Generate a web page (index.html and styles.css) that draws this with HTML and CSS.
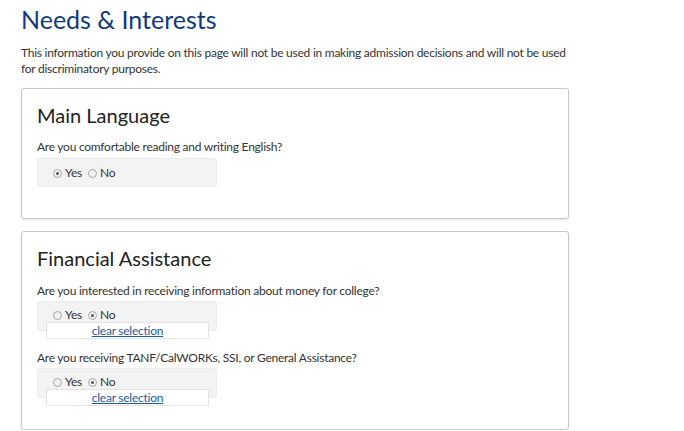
FILE: index.html
```html
<!DOCTYPE html>
<html lang="en">
<head>
<meta charset="utf-8">
<title>Needs &amp; Interests</title>
<link rel="stylesheet" href="styles.css">
</head>
<body>
<main class="page">
  <h1 class="page-title">Needs &amp; Interests</h1>
  <p class="intro">This information you provide on this page will not be used in making admission decisions and will not be used for discriminatory purposes.</p>

  <section class="card card-lang">
    <h2 class="card-title">Main Language</h2>
    <p class="question">Are you comfortable reading and writing English?</p>
    <div class="choice-box">
      <div class="choices">
        <span class="radio checked"></span><span class="opt">Yes</span>
        <span class="radio"></span><span class="opt">No</span>
      </div>
    </div>
  </section>

  <section class="card card-fin">
    <h2 class="card-title">Financial Assistance</h2>
    <p class="question">Are you interested in receiving information about money for college?</p>
    <div class="choice-box with-clear">
      <div class="choices">
        <span class="radio"></span><span class="opt">Yes</span>
        <span class="radio checked"></span><span class="opt">No</span>
      </div>
      <div class="clear"><a href="#">clear selection</a></div>
    </div>
    <p class="question q2">Are you receiving TANF/CalWORKs, SSI, or General Assistance?</p>
    <div class="choice-box with-clear">
      <div class="choices">
        <span class="radio"></span><span class="opt">Yes</span>
        <span class="radio checked"></span><span class="opt">No</span>
      </div>
      <div class="clear"><a href="#">clear selection</a></div>
    </div>
  </section>
</main>
</body>
</html>
```

FILE: styles.css
```css
* { box-sizing: border-box; }
html, body { margin: 0; padding: 0; background: #fff; }
body {
  font-family: Lato, "Open Sans", "Liberation Sans", sans-serif;
  color: #333;
  font-size: 12px;
  line-height: 16px;
  letter-spacing: -0.25px;
}
.page { padding: 0 21px; width: 600px; }
.page-title {
  margin: 0;
  padding-top: 3px;
  font-size: 25px;
  line-height: 32px;
  font-weight: 400;
  letter-spacing: 0;
  color: #123a78;
}
.intro { margin: 10px 0 0; }
.card {
  border: 1px solid #c9c9c9;
  border-radius: 3px;
  box-shadow: 0 1px 2px rgba(0,0,0,0.12);
  padding: 13px 15px 0;
  width: 548px;
}
.card-lang { margin-top: 11px; height: 131px; }
.card-fin { margin-top: 12px; height: 199px; }
.card-title {
  margin: 0;
  font-size: 20px;
  line-height: 26px;
  font-weight: 400;
  letter-spacing: 0;
  color: #222;
}
.question { margin: 12px 0 0; }
.card-lang .question { margin-top: 11px; }
.choice-box {
  margin-top: 3px;
  width: 180px;
  height: 29px;
  background: #f3f3f3;
  border: 1px solid #ececec;
  border-radius: 3px;
  padding: 6px 0 0 15px;
}
.with-clear { height: 30px; margin-top: 2px; padding-top: 5px; }
.choices { display: flex; align-items: center; height: 16px; }
.radio {
  width: 9px; height: 9px;
  border-radius: 50%;
  border: 1px solid #a8a8a8;
  background: #f0f0f0;
  position: relative;
  margin-right: 3px;
}
.radio.checked::after {
  content: "";
  position: absolute;
  left: 2px; top: 2px;
  width: 3px; height: 3px;
  border-radius: 50%;
  background: #555;
}
.opt { margin-right: 6px; }
.clear {
  margin: -1px 0 0 -7px;
  width: 163px;
  height: 17px;
  background: #fff;
  border: 1px solid #e4e4e4;
  text-align: center;
  line-height: 15px;
}
.clear a { color: #1f5c99; text-decoration: underline; }
.q2 { margin-top: 19px; }
```
